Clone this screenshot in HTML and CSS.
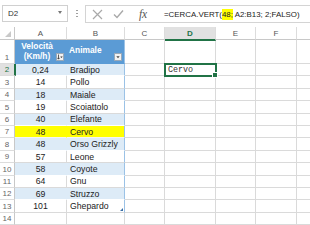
FILE: index.html
```html
<!DOCTYPE html>
<html lang="it">
<head>
<meta charset="utf-8">
<title>CERCA.VERT</title>
<link rel="stylesheet" href="styles.css">
</head>
<body>
<div class="topbar">
  <div class="namebox"><span>D2</span><span class="nb-arrow"></span></div>
  <div class="grip"></div>
  <div class="fxbar">
    <div class="fx-icons">
      <svg class="ic-x" width="11" height="11" viewBox="0 0 11 11"><path d="M1 1L10 10M10 1L1 10" stroke="#a9a9a9" stroke-width="1.2" fill="none"/></svg>
      <svg class="ic-ok" width="11" height="10" viewBox="0 0 11 10"><path d="M1 5.5L4 8.5L10 1.5" stroke="#a9a9a9" stroke-width="1.4" fill="none"/></svg>
      <span class="ic-fx">fx</span>
    </div>
    <div class="formula">=CERCA.VERT(<span class="hl">48;</span> A2:B13; 2;FALSO)</div>
  </div>
</div>
<div class="sheet">
  <div class="corner"><span class="tri"></span></div>
  <div class="ch">A</div><div class="ch">B</div><div class="ch">C</div><div class="ch sel">D</div><div class="ch">E</div><div class="ch">F</div><div class="ch last"></div>

  <div class="rh">1</div>
  <div class="c thA"><span class="thtext">Velocità<br>(Km/h)</span><span class="btn"><svg width="6" height="6" viewBox="0 0 6 6"><path d="M1.5 0.5V5M0.3 3.8L1.5 5.2L2.7 3.8" stroke="#333" stroke-width="0.8" fill="none"/><path d="M3.3 2.5H5.7L4.5 4Z" fill="#333"/></svg></span></div>
  <div class="c thB"><span class="thtext">Animale</span><span class="btn"><svg width="6" height="6" viewBox="0 0 6 6"><path d="M1.3 2.3H4.7L3 4.2Z" fill="#444"/></svg></span></div>
  <div class="c"></div><div class="c"></div><div class="c"></div><div class="c"></div><div class="c last"></div>

  <div class="rh sel">2</div>
  <div class="c n band">0,24</div><div class="c t band tr">Bradipo</div>
  <div class="c"></div><div class="c active">Cervo<span class="handle"></span></div><div class="c"></div><div class="c"></div><div class="c last"></div>

  <div class="rh">3</div>
  <div class="c n">14</div><div class="c t tr">Pollo</div>
  <div class="c"></div><div class="c"></div><div class="c"></div><div class="c"></div><div class="c last"></div>

  <div class="rh">4</div>
  <div class="c n band">18</div><div class="c t band tr">Maiale</div>
  <div class="c"></div><div class="c"></div><div class="c"></div><div class="c"></div><div class="c last"></div>

  <div class="rh">5</div>
  <div class="c n">19</div><div class="c t tr">Scoiattolo</div>
  <div class="c"></div><div class="c"></div><div class="c"></div><div class="c"></div><div class="c last"></div>

  <div class="rh">6</div>
  <div class="c n band">40</div><div class="c t band tr">Elefante</div>
  <div class="c"></div><div class="c"></div><div class="c"></div><div class="c"></div><div class="c last"></div>

  <div class="rh">7</div>
  <div class="c n yel yl">48</div><div class="c t yel yr tr">Cervo</div>
  <div class="c"></div><div class="c"></div><div class="c"></div><div class="c"></div><div class="c last"></div>

  <div class="rh">8</div>
  <div class="c n band">48</div><div class="c t band tr">Orso Grizzly</div>
  <div class="c"></div><div class="c"></div><div class="c"></div><div class="c"></div><div class="c last"></div>

  <div class="rh">9</div>
  <div class="c n">57</div><div class="c t tr">Leone</div>
  <div class="c"></div><div class="c"></div><div class="c"></div><div class="c"></div><div class="c last"></div>

  <div class="rh">10</div>
  <div class="c n band">58</div><div class="c t band tr">Coyote</div>
  <div class="c"></div><div class="c"></div><div class="c"></div><div class="c"></div><div class="c last"></div>

  <div class="rh">11</div>
  <div class="c n">64</div><div class="c t tr">Gnu</div>
  <div class="c"></div><div class="c"></div><div class="c"></div><div class="c"></div><div class="c last"></div>

  <div class="rh">12</div>
  <div class="c n band">69</div><div class="c t band tr">Struzzo</div>
  <div class="c"></div><div class="c"></div><div class="c"></div><div class="c"></div><div class="c last"></div>

  <div class="rh">13</div>
  <div class="c n">101</div><div class="c t tr resize">Ghepardo</div>
  <div class="c"></div><div class="c"></div><div class="c"></div><div class="c"></div><div class="c last"></div>

  <div class="rh">14</div>
  <div class="c"></div><div class="c"></div>
  <div class="c"></div><div class="c"></div><div class="c"></div><div class="c"></div><div class="c last"></div>
</div>
</body>
</html>
```

FILE: styles.css
```css
html, body {
  margin: 0;
  padding: 0;
  background: #ffffff;
}
body {
  width: 310px;
  height: 225px;
  overflow: hidden;
  font-family: "Liberation Sans", Arial, sans-serif;
  color: #222;
}

/* ---------- formula bar ---------- */
.topbar {
  display: flex;
  align-items: flex-start;
  height: 27px;
  padding: 5px 0 0 2px;
  box-sizing: border-box;
}
.namebox {
  width: 66px;
  height: 17px;
  border: 1px solid #d0d0d0;
  box-sizing: border-box;
  display: flex;
  align-items: center;
  justify-content: space-between;
  padding: 0 5px 0 5px;
  font-size: 8px;
  color: #333;
}
.nb-arrow {
  width: 0;
  height: 0;
  border-left: 2.5px solid transparent;
  border-right: 2.5px solid transparent;
  border-top: 3px solid #777;
  margin-top: -2px;
}
.grip {
  width: 2px;
  height: 9px;
  margin: 4px 7px 0 8px;
  background: radial-gradient(circle, #a0a0a0 0.7px, transparent 1.1px) repeat-y;
  background-size: 2px 3px;
}
.fxbar {
  flex: 1;
  height: 18px;
  border: 1px solid #d4d4d4;
  border-right: none;
  box-sizing: border-box;
  display: flex;
  align-items: center;
}
.fx-icons {
  width: 70px;
  flex: none;
  display: flex;
  align-items: center;
  padding-left: 6px;
  box-sizing: border-box;
}
.ic-x { margin-right: 10px; }
.ic-ok { margin-right: 15px; }
.ic-fx {
  font-family: "Liberation Serif", "Times New Roman", serif;
  font-style: italic;
  font-size: 11.5px;
  color: #555;
  letter-spacing: -0.3px;
}
.formula {
  padding-left: 8px;
  font-size: 7.9px;
  color: #222;
  white-space: nowrap;
}
.hl {
  background: #ffff00;
  padding: 1px 0;
}

/* ---------- sheet ---------- */
.sheet {
  display: grid;
  grid-template-columns: 15px 52px 58px 40px 51px 40px 41px 1fr;
  grid-template-rows: 13px 24px repeat(13, 12.4px);
}
.corner {
  border-right: 1px solid #c8c8c8;
  border-bottom: 1px solid #c8c8c8;
  display: flex;
  align-items: flex-end;
  justify-content: flex-end;
  padding: 0 3px 2px 0;
}
.tri {
  width: 0;
  height: 0;
  border-left: 6px solid transparent;
  border-bottom: 6px solid #c9c9c9;
}
.ch {
  border-right: 1px solid #dcdcdc;
  border-bottom: 1px solid #c8c8c8;
  font-size: 8px;
  color: #555;
  display: flex;
  align-items: center;
  justify-content: center;
}
.ch.sel {
  background: #e1e1e1;
  color: #217346;
  font-weight: bold;
  border-bottom: 2px solid #217346;
  margin-bottom: -1px;
  position: relative;
  z-index: 1;
}
.rh {
  border-right: 1px solid #c8c8c8;
  border-bottom: 1px solid #dcdcdc;
  font-size: 8px;
  color: #666;
  display: flex;
  align-items: flex-end;
  justify-content: center;
  padding-bottom: 1px;
}
.rh.sel {
  background: #e1e1e1;
  color: #217346;
  border-right: 2px solid #217346;
  margin-right: -1px;
  position: relative;
  z-index: 1;
}
.c {
  border-right: 1px solid #dadada;
  border-bottom: 1px solid #dadada;
  font-size: 8.7px;
  color: #222;
  display: flex;
  align-items: flex-end;
  padding-bottom: 0.5px;
  white-space: nowrap;
  min-width: 0;
}
.last { border-right: none; }
.n { justify-content: center; }
.t { padding-left: 3px; }
.band {
  background: #ddebf7;
  border-bottom-color: #ffffff;
  border-right-color: #ddebf7;
}
.tr { border-right-color: #9bc2e6; }
.yel {
  background: #ffff00;
  border-bottom-color: #f4f4f4;
}
.yl { border-right-color: #ffff00; }

.thA, .thB {
  background: #5b9bd5;
  color: #ffffff;
  font-weight: bold;
  font-size: 8.4px;
  border-bottom-color: #5b9bd5;
  border-right-color: #5b9bd5;
  align-items: flex-end;
  padding-bottom: 2px;
}
.thB { border-right-color: #9bc2e6; }
.thA .thtext {
  flex: 1;
  text-align: center;
  line-height: 10px;
  padding-left: 3px;
}
.thB .thtext {
  flex: 1;
  align-self: center;
  padding-left: 2px;
  margin-top: -2px;
}
.btn {
  width: 6px;
  height: 6px;
  background: #f2f2f2;
  border: 1px solid #9aa9b8;
  display: flex;
  margin-right: 2px;
  margin-bottom: 0;
}
.btn svg { display: block; }

.active {
  border: 2px solid #217346;
  margin: -1px;
  position: relative;
  z-index: 2;
  font-family: "Liberation Mono", "Courier New", monospace;
  font-size: 8.4px;
  color: #333;
  align-items: center;
  padding-left: 2px;
}
.handle {
  position: absolute;
  right: -3px;
  bottom: -3px;
  width: 4px;
  height: 4px;
  background: #217346;
  border: 1px solid #ffffff;
}
.resize { position: relative; }
.resize::after {
  content: "";
  position: absolute;
  right: 1px;
  bottom: 1px;
  width: 0;
  height: 0;
  border-left: 3px solid transparent;
  border-bottom: 3px solid #3a6ea5;
}
```
